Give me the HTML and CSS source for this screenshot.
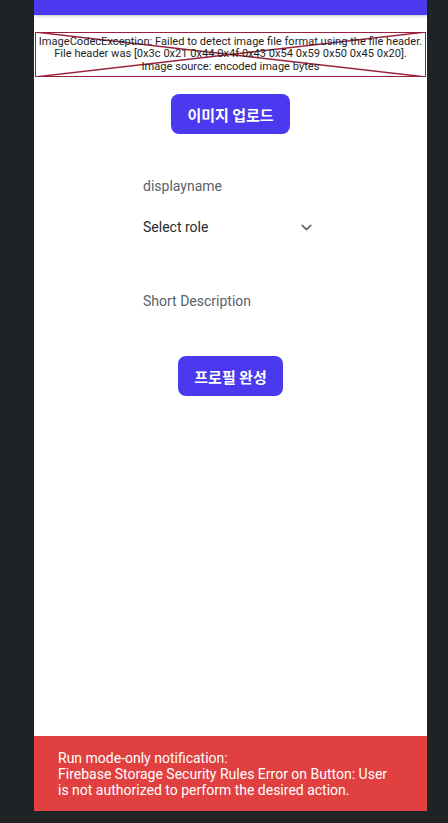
FILE: index.html
```html
<!DOCTYPE html>
<html>
<head>
<meta charset="utf-8">
<link rel="stylesheet" href="styles.css">
</head>
<body>
<div class="phone">
  <div class="appbar"></div>
  <div class="imgerr">
    <svg class="cross" viewBox="0 0 391 45" preserveAspectRatio="none">
      <rect x="0.5" y="0.5" width="390" height="44" fill="none" stroke="#9b1f3a" stroke-width="1"/>
      <line x1="0" y1="0" x2="391" y2="45" stroke="#9b1f3a" stroke-width="1.4"/>
      <line x1="391" y1="0" x2="0" y2="45" stroke="#9b1f3a" stroke-width="1.4"/>
    </svg>
    <p class="errtext">ImageCodecException: Failed to detect image file format using the file header.<br>File header was [0x3c 0x21 0x44 0x4f 0x43 0x54 0x59 0x50 0x45 0x20].<br>Image source: encoded image bytes</p>
  </div>
  <div class="btnrow first"><button class="btn wide">이미지 업로드</button></div>
  <div class="form">
    <div class="field label">displayname</div>
    <div class="field select">
      <span>Select role</span>
      <svg class="chev" viewBox="0 0 24 24"><path d="M6 9l6 6 6-6" fill="none" stroke="#57636C" stroke-width="2.2" stroke-linecap="round" stroke-linejoin="round"/></svg>
    </div>
    <div class="field label desc">Short Description</div>
  </div>
  <div class="btnrow second"><button class="btn narrow">프로필 완성</button></div>
  <div class="spacer"></div>
  <div class="notice">Run mode-only notification:<br>Firebase Storage Security Rules Error on Button: User is not authorized to perform the desired action.</div>
</div>
</body>
</html>
```

FILE: styles.css
```css
html, body {
  margin: 0;
  padding: 0;
  background: #1f2326;
}
body {
  width: 448px;
  height: 823px;
  overflow: hidden;
  font-family: Roboto, "Noto Sans CJK KR", sans-serif;
}
.phone {
  margin-left: 34px;
  width: 393px;
  height: 811px;
  background: #ffffff;
  display: flex;
  flex-direction: column;
}
.appbar {
  height: 15px;
  background: #4b39ef;
  box-shadow: 0 1px 3px rgba(0,0,0,0.25);
  flex: none;
}
.imgerr {
  position: relative;
  margin: 17px 1px 0 1px;
  height: 45px;
  display: flex;
  align-items: center;
  justify-content: center;
  flex: none;
}
.cross {
  position: absolute;
  left: 0;
  top: 0;
  width: 100%;
  height: 100%;
}
.errtext {
  position: relative;
  margin: 0;
  font-size: 11.1px;
  line-height: 12.5px;
  color: #1e1e1e;
  text-align: center;
  white-space: nowrap;
}
.btnrow {
  display: flex;
  justify-content: center;
  flex: none;
}
.btnrow.first { margin-top: 17px; }
.btnrow.second { margin-top: 33px; }
.btn {
  height: 40px;
  border: none;
  border-radius: 8px;
  background: #4b39ef;
  color: #ffffff;
  font-family: "Noto Sans CJK KR", Roboto, sans-serif;
  font-weight: 700;
  font-size: 15px;
  padding: 0;
}
.btn.wide { width: 119px; }
.btn.narrow { width: 105px; }
.form {
  width: 199px;
  margin: 30px auto 0 auto;
  flex: none;
}
.field {
  font-size: 14px;
  color: #57636c;
  display: flex;
  align-items: center;
  padding-left: 12px;
  padding-right: 15px;
}
.field.label { height: 44px; }
.field.select {
  height: 38px;
  color: #252b2f;
  justify-content: space-between;
}
.field.desc { margin-top: 33px; }
.chev {
  width: 17px;
  height: 17px;
}
.spacer { flex: 1; }
.notice {
  flex: none;
  height: 75px;
  box-sizing: border-box;
  background: #e04040;
  color: #ffffff;
  font-size: 14px;
  line-height: 16px;
  padding: 14px 36px 0 24px;
}
```
